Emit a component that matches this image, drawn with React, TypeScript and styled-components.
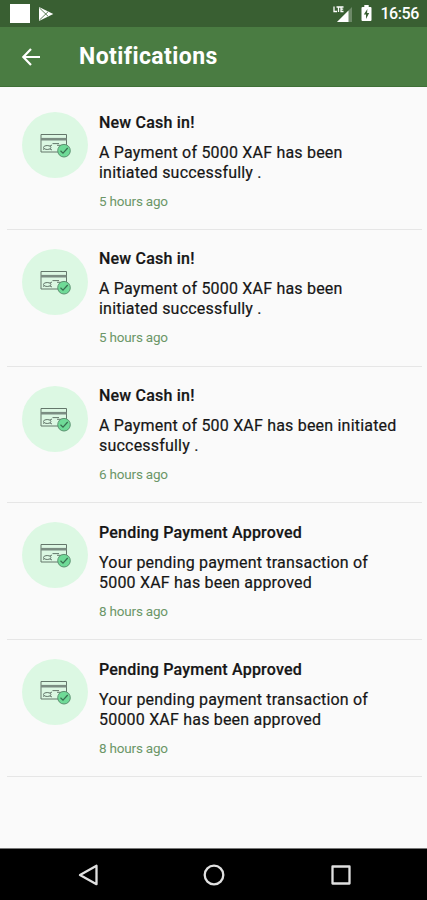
import React from "react";
import styled, { createGlobalStyle } from "styled-components";

const GlobalStyle = createGlobalStyle`
  * { box-sizing: border-box; }
  body { margin: 0; background: #fafafa; }
`;

const Screen = styled.div`
  display: flex;
  flex-direction: column;
  width: 427px;
  height: 900px;
  overflow: hidden;
  background: #fafafa;
  font-family: Roboto, sans-serif;
`;

const StatusBar = styled.div`
  display: flex;
  flex: none;
  align-items: center;
  justify-content: space-between;
  height: 27px;
  padding: 0 8px 0 10px;
  background: #395f32;
  color: #fff;
`;

const StatusGroup = styled.div<{ $gap: number }>`
  display: flex;
  align-items: center;
  gap: ${(p) => p.$gap}px;
`;

const AppSquare = styled.div`
  width: 20px;
  height: 19px;
  background: #fff;
`;

const Clock = styled.span`
  font-size: 16px;
  font-weight: 500;
  line-height: 27px;
  letter-spacing: -0.4px;
`;

const AppBar = styled.header`
  display: flex;
  flex: none;
  align-items: center;
  gap: 38px;
  height: 60px;
  padding-left: 21px;
  background: #4a7c42;
  border-bottom: 1px solid #3f7037;
  color: #fff;
`;

const BackButton = styled.button`
  display: flex;
  padding: 0;
  border: 0;
  background: none;
  color: inherit;
`;

const Title = styled.h1`
  margin: 1px 0 0;
  font-size: 23px;
  font-weight: 700;
  line-height: 30px;
  letter-spacing: 0.42px;
`;

const List = styled.main`
  flex: 1;
  padding: 6px 5px 0 7px;
`;

const Row = styled.article`
  display: flex;
  gap: 11px;
  height: 136.8px;
  padding: 19px 0 0 15px;
  border-bottom: 1px solid #e6e6e6;
`;

const Avatar = styled.div`
  display: flex;
  flex: none;
  align-items: center;
  justify-content: center;
  width: 66px;
  height: 66px;
  border-radius: 50%;
  background: #dcf8e3;
`;

const Content = styled.div`
  flex: 1;
  padding-top: 0.7px;
  color: #161616;
`;

const Heading = styled.h2`
  margin: 0;
  font-size: 16px;
  font-weight: 500;
  line-height: 20px;
  letter-spacing: 0.2px;
  -webkit-text-stroke: 0.2px #161616;
`;

const Message = styled.p`
  margin: 10px 0 0;
  font-size: 16px;
  font-weight: 400;
  line-height: 20px;
  letter-spacing: 0.2px;
  -webkit-text-stroke: 0.2px #161616;
  white-space: pre-line;
`;

const Time = styled.time`
  display: block;
  margin-top: 9px;
  font-size: 13.5px;
  line-height: 18px;
  letter-spacing: -0.2px;
  color: #6b9667;
`;

const NavBar = styled.nav`
  display: grid;
  flex: none;
  grid-template-columns: repeat(3, 126.5px);
  justify-content: center;
  align-items: center;
  justify-items: center;
  height: 52px;
  padding-left: 1px;
  background: #000;
  border-top: 1px solid #777;
`;

const PlayIcon = () => (
  <svg width="16" height="16" viewBox="0 0 16 16">
    <path d="M1 1L15.3 8L1 15Z" fill="#fff" />
    <path d="M1.5 2L10 10.2M1.5 14L10 5.8" stroke="#395f32" strokeWidth="0.8" />
  </svg>
);

const SignalIcon = () => (
  <svg width="20" height="18" viewBox="0 0 20 18">
    <path d="M19 2V17H4Z" fill="#6d8968" />
    <path d="M15.5 5.5V17H4Z" fill="#fff" />
    <path d="M1 1.5V6.5H4M3.5 2H7.5M5.5 2V7M10.5 2H8V6.5H10.5M8 4.2H10.2" stroke="#fff" strokeWidth="1.3" fill="none" />
  </svg>
);

const BatteryIcon = () => (
  <svg width="11" height="17" viewBox="0 0 11 17">
    <path d="M3.3 0H7.7V2H9.5Q10.5 2 10.5 3V15Q10.5 16 9.5 16H1.5Q.5 16 .5 15V3Q.5 2 1.5 2H3.3Z" fill="#fff" />
    <path d="M6.4 4L2.8 9.5H5V14L8.2 8H6.1Z" fill="#395f32" />
  </svg>
);

const BackIcon = () => (
  <svg width="20" height="20" viewBox="0 0 20 20" fill="none" stroke="#fff" strokeWidth="2.2">
    <path d="M19 10H3M10 2L2.3 10L10 18" />
  </svg>
);

const CardIcon = () => (
  <svg width="32" height="26" viewBox="0 0 32 26" fill="none">
    <path d="M2 2.5H27.5V20H2Z" stroke="#64776b" strokeWidth="1" />
    <path d="M2 7.2H27.5" stroke="#7b8d82" strokeWidth="2.6" />
    <path d="M13.5 11.6H20M18 13.3H25" stroke="#64776b" strokeWidth="1" />
    <ellipse cx="8.2" cy="15.5" rx="3.7" ry="2" stroke="#64776b" strokeWidth="1" />
    <path d="M4 17.5L5.5 16.5M11 14L13 13M11 17L13 18" stroke="#64776b" />
    <circle cx="25" cy="18.7" r="6.3" fill="#6fda97" stroke="#5d9271" strokeWidth="1" />
    <path d="M21.5 18.7L24 21.1L28.7 16" stroke="#376e4f" strokeWidth="1.2" />
  </svg>
);

const NavIcon = styled.svg`
  display: block;
  fill: none;
  stroke: #e0e0e0;
  stroke-width: 2.3;
  stroke-linejoin: round;
`;

const notifications = [
  { title: "New Cash in!", message: "A Payment of 5000 XAF has been\ninitiated successfully .", time: "5 hours ago" },
  { title: "New Cash in!", message: "A Payment of 5000 XAF has been\ninitiated successfully .", time: "5 hours ago" },
  { title: "New Cash in!", message: "A Payment of 500 XAF has been initiated\nsuccessfully .", time: "6 hours ago" },
  { title: "Pending Payment Approved", message: "Your pending payment transaction of\n5000 XAF has been approved", time: "8 hours ago" },
  { title: "Pending Payment Approved", message: "Your pending payment transaction of\n50000 XAF has been approved", time: "8 hours ago" },
];

export default function App() {
  return (
    <Screen>
      <GlobalStyle />
      <StatusBar>
        <StatusGroup $gap={8}>
          <AppSquare />
          <PlayIcon />
        </StatusGroup>
        <StatusGroup $gap={8}>
          <SignalIcon />
          <BatteryIcon />
          <Clock>16:56</Clock>
        </StatusGroup>
      </StatusBar>
      <AppBar>
        <BackButton aria-label="Back">
          <BackIcon />
        </BackButton>
        <Title>Notifications</Title>
      </AppBar>
      <List>
        {notifications.map((n, i) => (
          <Row key={i}>
            <Avatar>
              <CardIcon />
            </Avatar>
            <Content>
              <Heading>{n.title}</Heading>
              <Message>{n.message}</Message>
              <Time>{n.time}</Time>
            </Content>
          </Row>
        ))}
      </List>
      <NavBar>
        <NavIcon width="22" height="22" viewBox="0 0 22 22">
          <path d="M19.5 1.8V20.2L3 11Z" />
        </NavIcon>
        <NavIcon width="22" height="22" viewBox="0 0 22 22">
          <circle cx="11" cy="11" r="9.3" />
        </NavIcon>
        <NavIcon width="22" height="22" viewBox="0 0 22 22">
          <rect x="2.5" y="2.5" width="17" height="17" />
        </NavIcon>
      </NavBar>
    </Screen>
  );
}
